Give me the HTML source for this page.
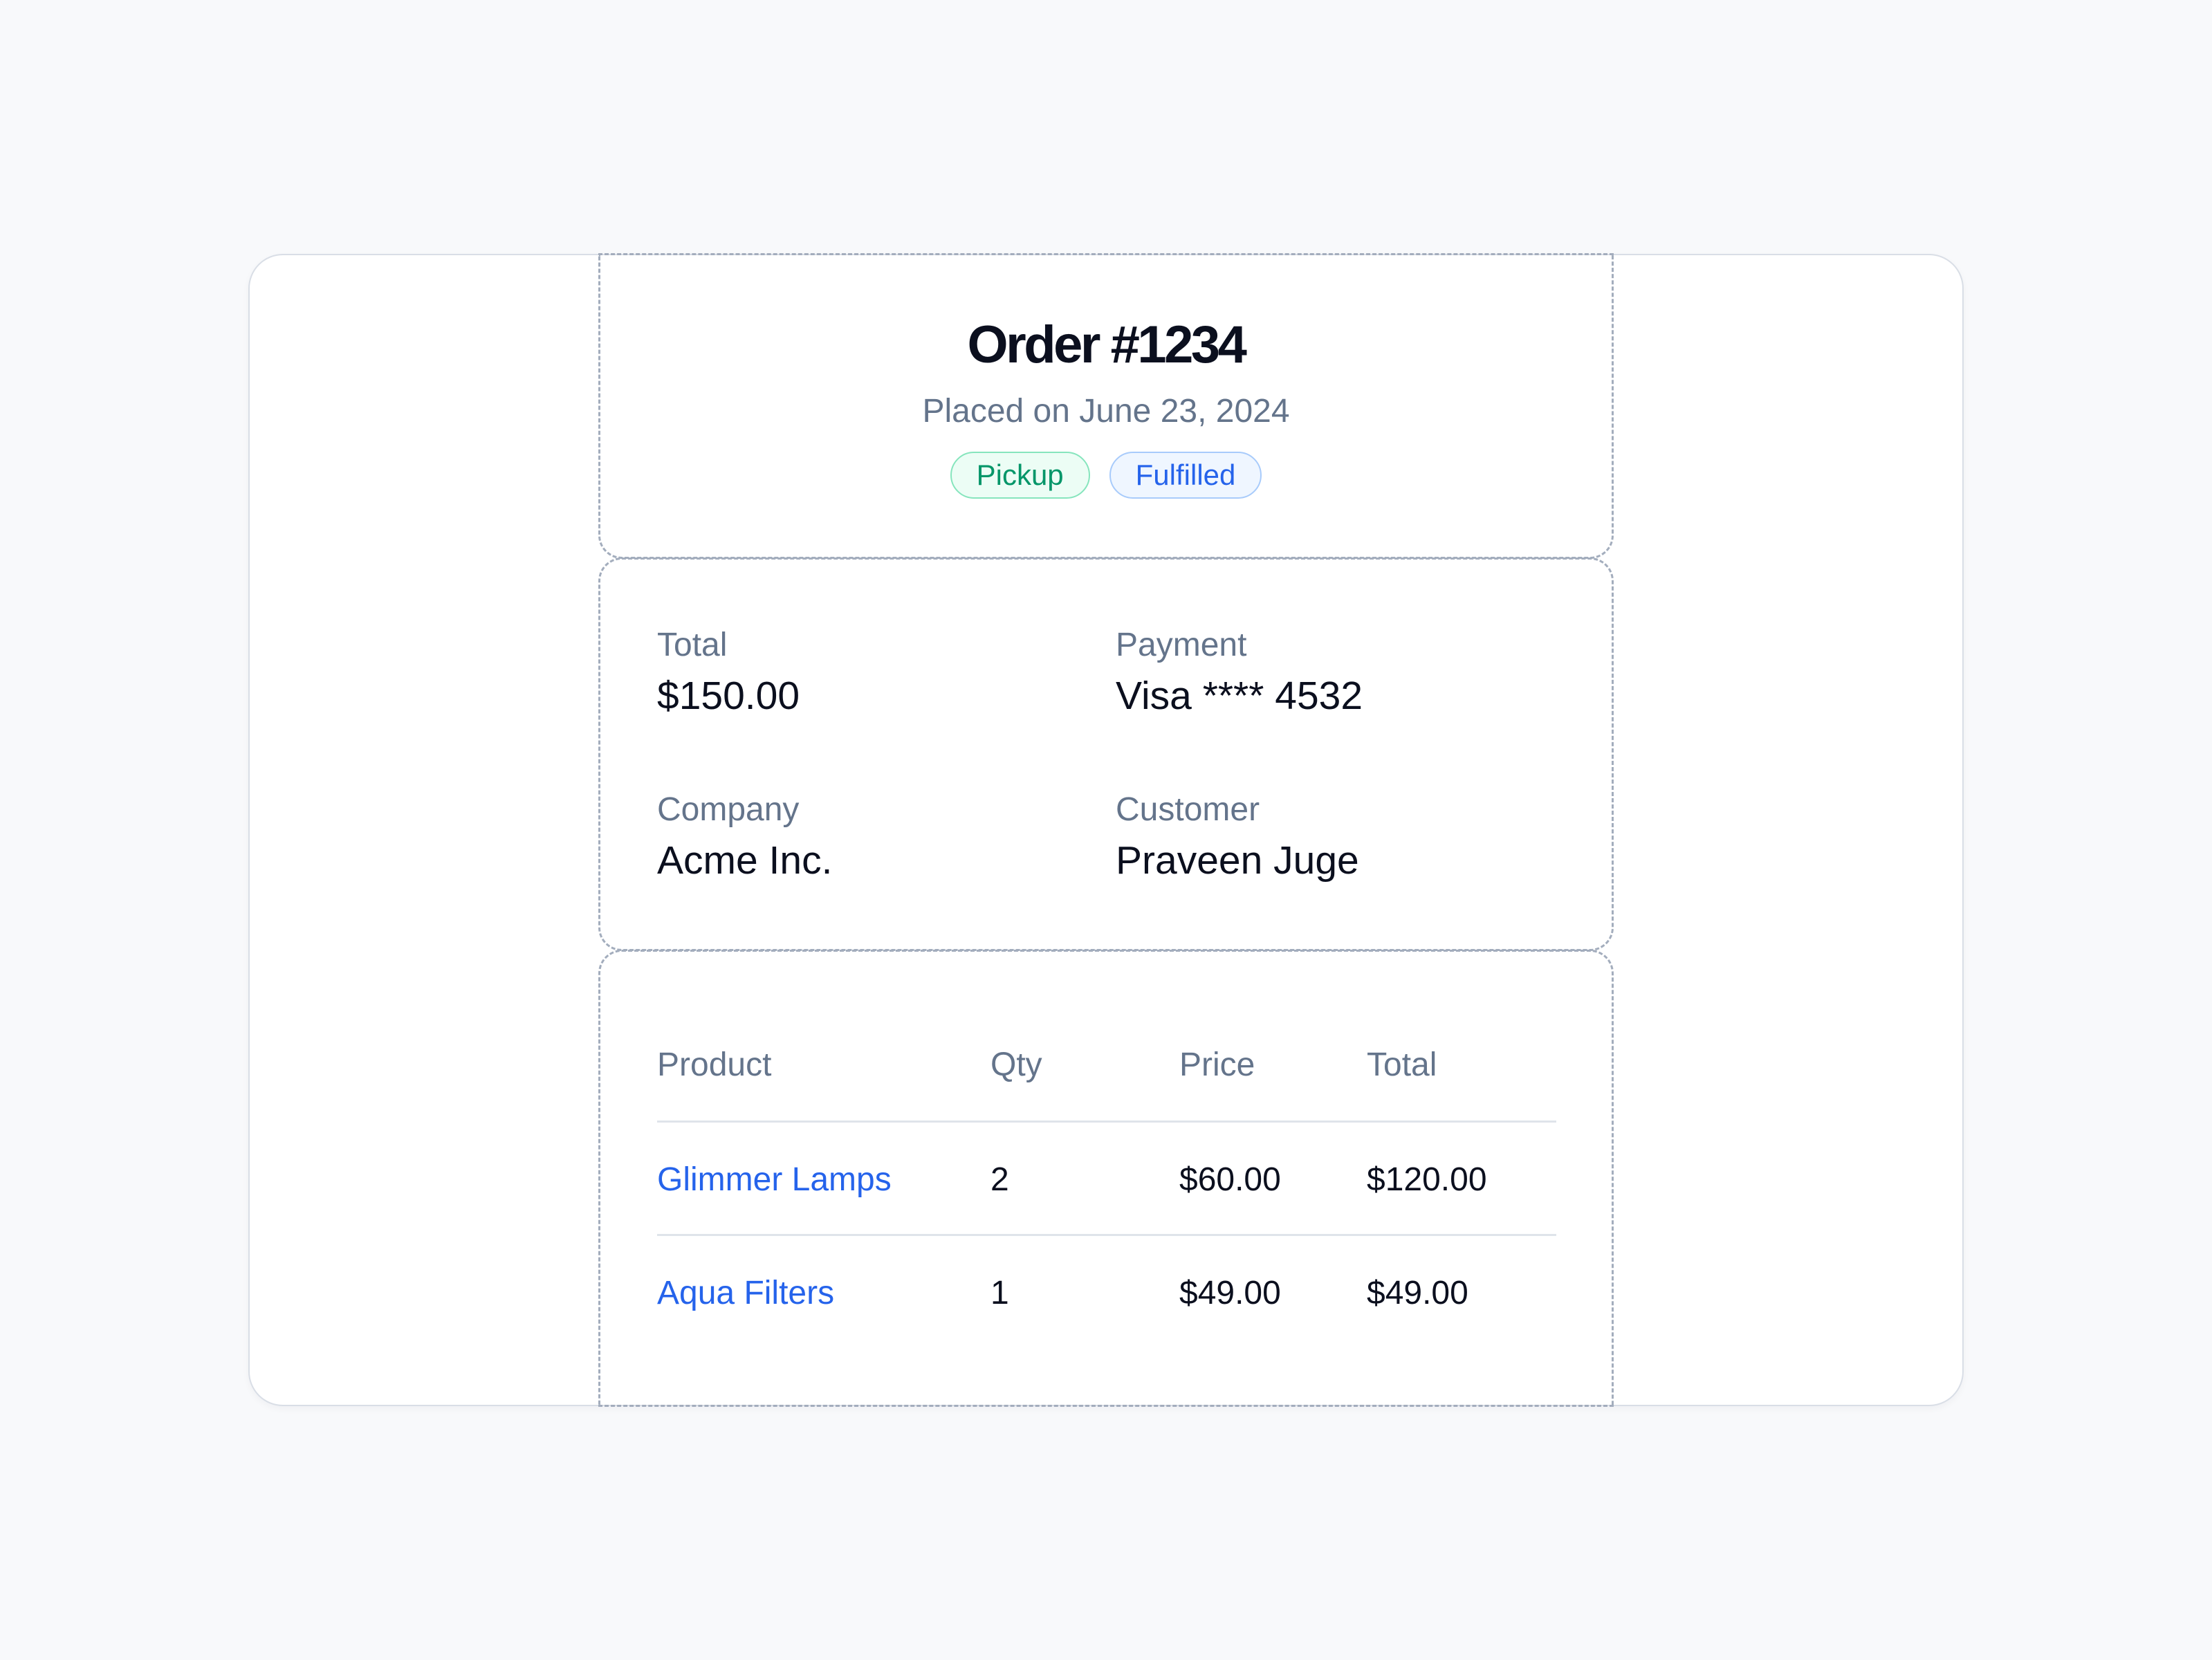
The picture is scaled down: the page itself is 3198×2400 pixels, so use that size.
<!DOCTYPE html>
<html><head><meta charset="utf-8"><style>
*{box-sizing:border-box;margin:0;padding:0}
html,body{width:3198px;height:2400px;background:#f8f9fb;font-family:"Liberation Sans",sans-serif;overflow:hidden}
.card{position:absolute;left:359px;top:367px;width:2480px;height:1666px;background:#fff;border:2px solid #d9dee6;border-radius:50px;box-shadow:0 4px 10px rgba(15,23,42,.04)}
.sec{position:absolute;left:865px;width:1468px;border:3px dashed #a3adbd}
.s1{top:366px;height:442px;border-radius:0 0 34px 34px;text-align:center}
.s2{top:806px;height:569px;border-radius:34px}
.s3{top:1373px;height:661px;border-radius:34px 34px 0 0}
h1{position:absolute;left:0;right:0;top:86px;font-size:76px;font-weight:bold;color:#0b0f1e;letter-spacing:-3.5px}
.sub{position:absolute;left:0;right:0;top:198px;font-size:48px;color:#64748b}
.badges{position:absolute;left:0;right:0;top:284px;display:flex;justify-content:center;gap:28px}
.b{height:68px;border-radius:34px;font-size:42px;line-height:64px;padding:0 36px;border:2px solid}
.g{background:#ecfdf5;border-color:#86e5bd;color:#059669}
.bl{background:#eff6ff;border-color:#a8cbfb;color:#2563eb}
.lab{position:absolute;font-size:48px;color:#64748b}
.val{position:absolute;font-size:57px;color:#0b0f1e}
.t{position:absolute;font-size:48px}
.h{color:#64748b}.d{color:#0b0f1e}.a{color:#2563eb}
.ln{position:absolute;left:82px;width:1300px;height:3px;background:#dfe4ea}
</style></head><body>
<div class="card"></div>
<div class="sec s1">
<h1>Order #1234</h1>
<div class="sub">Placed on June 23, 2024</div>
<div class="badges"><div class="b g">Pickup</div><div class="b bl">Fulfilled</div></div>
</div>
<div class="sec s2">
<div class="lab" style="left:82px;top:96px">Total</div>
<div class="val" style="left:82px;top:164px">$150.00</div>
<div class="lab" style="left:745px;top:96px">Payment</div>
<div class="val" style="left:745px;top:164px">Visa **** 4532</div>
<div class="lab" style="left:82px;top:334px">Company</div>
<div class="val" style="left:82px;top:402px">Acme Inc.</div>
<div class="lab" style="left:745px;top:334px">Customer</div>
<div class="val" style="left:745px;top:402px">Praveen Juge</div>
</div>
<div class="sec s3">
<div class="t h" style="left:82px;top:136px">Product</div>
<div class="t h" style="left:564px;top:136px">Qty</div>
<div class="t h" style="left:837px;top:136px">Price</div>
<div class="t h" style="left:1108px;top:136px">Total</div>
<div class="ln" style="top:244px"></div>
<div class="t a" style="left:82px;top:302px">Glimmer Lamps</div>
<div class="t d" style="left:564px;top:302px">2</div>
<div class="t d" style="left:837px;top:302px">$60.00</div>
<div class="t d" style="left:1108px;top:302px">$120.00</div>
<div class="ln" style="top:408px"></div>
<div class="t a" style="left:82px;top:466px">Aqua Filters</div>
<div class="t d" style="left:564px;top:466px">1</div>
<div class="t d" style="left:837px;top:466px">$49.00</div>
<div class="t d" style="left:1108px;top:466px">$49.00</div>
</div>
</body></html>
